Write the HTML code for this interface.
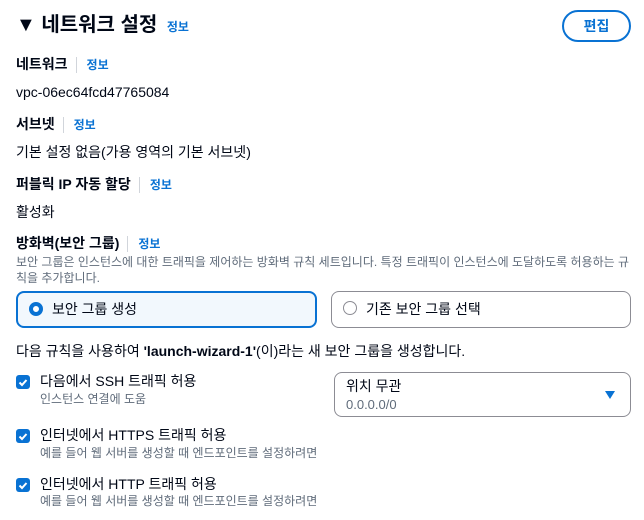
<!DOCTYPE html>
<html><head><meta charset="utf-8"><style>
body{margin:0;width:644px;height:520px;background:#fff;font-family:"Liberation Sans","Noto Sans CJK KR",sans-serif;color:#000716;position:relative;overflow:hidden}
.a{position:absolute;white-space:nowrap}
.t{font-size:14px;line-height:18px}
.b{font-weight:bold}
.info{color:#0972d3;font-weight:bold;font-size:12px}
.sep{display:inline-block;width:1px;height:16px;background:#d1d5db;vertical-align:middle;margin:0 10px 0 8px}
.g{color:#5f6b7a;font-size:12px;line-height:16px}
.cb{position:absolute;width:14px;height:14px;background:#0972d3;border-radius:3px}
</style></head><body>
<div class="a" style="left:16px;top:12px;font-size:20px;line-height:26px;font-weight:bold">▼ 네트워크 설정 <span class="info" style="margin-left:4px">정보</span></div>
<div class="a" style="left:562px;top:10px;width:65px;height:28px;border:2px solid #0972d3;border-radius:16px;text-align:center;line-height:28px;color:#0972d3;font-weight:bold;font-size:14px">편집</div>

<div class="a t b" style="left:16px;top:55px">네트워크<span class="sep"></span><span class="info">정보</span></div>
<div class="a t" style="left:16px;top:83px">vpc-06ec64fcd47765084</div>
<div class="a t b" style="left:16px;top:115px">서브넷<span class="sep"></span><span class="info">정보</span></div>
<div class="a t" style="left:16px;top:143px">기본 설정 없음(가용 영역의 기본 서브넷)</div>
<div class="a t b" style="left:16px;top:175px">퍼블릭 IP 자동 할당<span class="sep"></span><span class="info">정보</span></div>
<div class="a t" style="left:16px;top:203px">활성화</div>
<div class="a t b" style="left:16px;top:234px">방화벽(보안 그룹)<span class="sep"></span><span class="info">정보</span></div>
<div class="a g" style="left:16px;top:254px">보안 그룹은 인스턴스에 대한 트래픽을 제어하는 방화벽 규칙 세트입니다. 특정 트래픽이 인스턴스에 도달하도록 허용하는 규</div>
<div class="a g" style="left:16px;top:270px">칙을 추가합니다.</div>

<div class="a" style="left:16px;top:291px;width:297px;height:33px;border:2px solid #0972d3;border-radius:8px;background:#f2f8fd"></div>
<div class="a" style="left:29px;top:302px;width:6px;height:6px;border:4px solid #0972d3;border-radius:50%;background:#fff"></div>
<div class="a t" style="left:52px;top:300px">보안 그룹 생성</div>
<div class="a" style="left:331px;top:291px;width:298px;height:35px;border:1px solid #8c8c94;border-radius:8px"></div>
<div class="a" style="left:343px;top:301px;width:12px;height:12px;border:1px solid #8c8c94;border-radius:50%"></div>
<div class="a t" style="left:366px;top:300px">기존 보안 그룹 선택</div>

<div class="a t" style="left:16px;top:342px">다음 규칙을 사용하여 <b>'launch-wizard-1'</b>(이)라는 새 보안 그룹을 생성합니다.</div>

<div class="cb" style="left:16px;top:375px"></div><svg class="a" style="left:16px;top:375px" width="14" height="14"><path d="M3.5 7.5l2.5 2.5 4.5-5" stroke="#fff" stroke-width="2" fill="none"/></svg>
<div class="a t" style="left:40px;top:372px">다음에서 SSH 트래픽 허용</div>
<div class="a g" style="left:40px;top:391px">인스턴스 연결에 도움</div>
<div class="a" style="left:334px;top:372px;width:295px;height:43px;border:1px solid #8c8c94;border-radius:8px"></div>
<div class="a t" style="left:346px;top:377px">위치 무관</div>
<div class="a" style="left:346px;top:397px;font-size:13px;color:#5f6b7a">0.0.0.0/0</div>
<svg class="a" style="left:604px;top:390px" width="12" height="10"><path d="M1 1h10L6 9z" fill="#0972d3"/></svg>

<div class="cb" style="left:16px;top:429px"></div><svg class="a" style="left:16px;top:429px" width="14" height="14"><path d="M3.5 7.5l2.5 2.5 4.5-5" stroke="#fff" stroke-width="2" fill="none"/></svg>
<div class="a t" style="left:40px;top:426px">인터넷에서 HTTPS 트래픽 허용</div>
<div class="a g" style="left:40px;top:445px">예를 들어 웹 서버를 생성할 때 엔드포인트를 설정하려면</div>

<div class="cb" style="left:16px;top:478px"></div><svg class="a" style="left:16px;top:478px" width="14" height="14"><path d="M3.5 7.5l2.5 2.5 4.5-5" stroke="#fff" stroke-width="2" fill="none"/></svg>
<div class="a t" style="left:40px;top:475px">인터넷에서 HTTP 트래픽 허용</div>
<div class="a g" style="left:40px;top:493px">예를 들어 웹 서버를 생성할 때 엔드포인트를 설정하려면</div>
</body></html>
